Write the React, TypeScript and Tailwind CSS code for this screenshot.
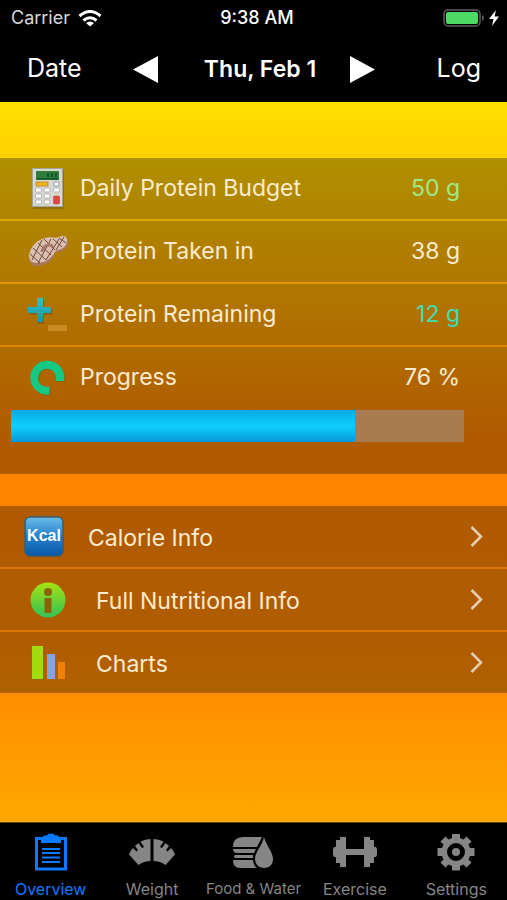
import { ReactNode } from "react";

interface StatRow {
  label: string;
  value: string;
  color: string;
  icon: ReactNode;
}

interface LinkRow {
  label: string;
  iconWidth: string;
  icon: ReactNode;
}

interface Tab {
  label: string;
  size: string;
  icon: ReactNode;
}

function CalculatorIcon() {
  return (
    <svg width="32" height="42" viewBox="0 0 32 42">
      <rect x="1" y="2" width="31" height="39" fill="#745c22" opacity="0.5" />
      <rect x="0.5" y="0.5" width="30" height="38" fill="#d9d9d2" stroke="#a5a49b" />
      <rect x="4" y="3" width="23" height="9" fill="#2f7d3c" />
      <path d="M5 10 H26 V11.5 H5 Z M15 5 h2 v4 h-2 Z M19 5 h2 v4 h-2 Z M23 5 h2 v4 h-2 Z" fill="#12572a" />
      <rect x="4" y="14" width="12" height="4" fill="#efb321" stroke="#bb8415" strokeWidth="0.8" />
      <rect x="22" y="14" width="5" height="4" fill="#f4f4f1" stroke="#8b9aa2" strokeWidth="0.8" />
      <g fill="#ffffff" stroke="#9c9ca6" strokeWidth="0.7">
        <rect x="3.500" y="20" width="6" height="4" rx="1" />
        <rect x="12" y="20" width="6" height="4" rx="1" />
        <rect x="21.500" y="20" width="6" height="4" rx="1" />
        <rect x="3.500" y="26" width="6" height="4" rx="1" />
        <rect x="12" y="26" width="6" height="4" rx="1" />
        <rect x="3.500" y="32" width="6" height="4" rx="1" />
        <rect x="12" y="32" width="6" height="4" rx="1" />
      </g>
      <rect x="21.500" y="28" width="6" height="8" rx="1" fill="#e8434a" stroke="#b34a43" strokeWidth="0.6" />
    </svg>
  );
}

function SteakIcon() {
  return (
    <svg width="40" height="33" viewBox="0 0 40 33">
      <path d="M1 23 C1 12 9 6 17 3 C23 1 27 4 31 3 C35 1 39 1 40 6 C41 12 36 17 30 17 C27 17 27 20 25 23 C21 29 15 31 9 31 C4 32 1 28 1 23 Z" fill="#a8795b" />
      <path d="M1 20 C3 10 10 5 17 3 C23 1 27 4 31 2 C35 0 39 1 39 5 C39 11 35 14 30 15 C26 16 27 18 24 21 C20 26 14 28 9 28 C3 28 1 25 1 20 Z" fill="#dcbfae" />
      <path d="M2 19 L12 28 M5 13 L18 25 M10 8 L23 20 M16 4 L27 15 M25 4 L34 12 M31 3 L38 8 M4 25 L14 5 M10 28 L23 4 M18 25 L31 4 M28 15 L36 2" stroke="#6b483e" strokeWidth="1" fill="none" />
      <path d="M14 17 C15 10 22 8 25 12" stroke="#a4796a" strokeWidth="3" fill="none" />
    </svg>
  );
}

function PlusMinusIcon() {
  return (
    <svg width="40" height="36" viewBox="0 0 40 36">
      <defs>
        <linearGradient id="plus" x1="0" y1="0" x2="0" y2="1">
          <stop offset="0" stopColor="#2fc5c4" />
          <stop offset="1" stopColor="#1793b0" />
        </linearGradient>
      </defs>
      <path d="M10 2 H16 V11 H24 V18 H16 V27 H10 V18 H2 V11 H10 Z" fill="#6f5715" opacity="0.6" />
      <path d="M9 1 H15 V10 H23 V16 H15 V25 H9 V16 H0 V10 H9 Z" fill="url(#plus)" />
      <rect x="20" y="28" width="19" height="6" fill="#c98c24" />
    </svg>
  );
}

function RingIcon() {
  return (
    <svg width="36" height="36" viewBox="0 0 36 36">
      <path d="M34 21 H25.500 A9 9 0 1 0 19.500 26.500 V34.500 A17 17 0 1 1 34 21 Z" transform="translate(1 1)" fill="#6e5a16" opacity="0.5" />
      <path d="M34 21 H25.500 A9 9 0 1 0 19.500 26.500 V34.500 A17 17 0 1 1 34 21 Z" fill="#14c984" />
    </svg>
  );
}

function KcalIcon() {
  return (
    <svg width="40" height="41" viewBox="0 0 40 41">
      <defs>
        <linearGradient id="kcal" x1="0" y1="0" x2="0" y2="1">
          <stop offset="0" stopColor="#6bbdea" />
          <stop offset="0.5" stopColor="#2381cb" />
          <stop offset="1" stopColor="#0758a8" />
        </linearGradient>
      </defs>
      <rect x="1" y="1" width="38" height="39" rx="5" fill="url(#kcal)" stroke="#3c5d6c" strokeWidth="1.5" />
      <text x="20" y="25" textAnchor="middle" fill="#ffffff" fontSize="16" fontWeight="700" fontFamily="'Liberation Sans', sans-serif">
        Kcal
      </text>
    </svg>
  );
}

function InfoIcon() {
  return (
    <svg width="36" height="36" viewBox="0 0 36 36">
      <defs>
        <linearGradient id="info" x1="0" y1="0" x2="0" y2="1">
          <stop offset="0" stopColor="#a7e211" />
          <stop offset="1" stopColor="#2fc257" />
        </linearGradient>
      </defs>
      <circle cx="18" cy="18" r="17.500" fill="url(#info)" />
      <circle cx="18" cy="10" r="4" fill="#8c6209" />
      <rect x="14.500" y="16" width="7" height="15" rx="1" fill="#8c6209" />
    </svg>
  );
}

function BarsIcon() {
  return (
    <svg width="36" height="34" viewBox="0 0 36 34">
      <rect x="3" y="1" width="11" height="33" fill="#7d6a12" opacity="0.5" />
      <rect x="2" y="0" width="11" height="33" fill="#a2dc10" />
      <rect x="17" y="8" width="8" height="25" fill="#86a3e6" />
      <rect x="28" y="16" width="7" height="17" fill="#ee8105" />
    </svg>
  );
}

function ClipboardIcon() {
  return (
    <svg width="32" height="38" viewBox="0 0 32 38">
      <rect x="1.500" y="5.500" width="29" height="30.500" fill="none" stroke="currentColor" strokeWidth="3" />
      <path d="M6 10 V6 L9 2.500 H12 Q12.500 0.500 16 0.500 Q19.500 0.500 20 2.500 H23 L26 6 V10 Z" fill="currentColor" />
      <path d="M7 16 H25 M7 20 H25 M7 24.500 H25 M7 29 H25" stroke="currentColor" strokeWidth="2" />
    </svg>
  );
}

function ScaleIcon() {
  return (
    <svg width="48" height="38" viewBox="0 0 48 38">
      <path d="M22.500 6 V28 Q16 28 10.500 32 L1 21.500 Q2 18 5 15 L8.500 18.500 L10 17 L7 13 L10.500 10 L14 15 L16 14 L12.500 8.500 Q17 6 22.500 6 Z" fill="currentColor" />
      <path d="M25.500 6 V28 Q32 28 37.500 32 L47 21.500 Q46 18 43 15 L39.500 18.500 L38 17 L41 13 L37.500 10 L34 15 L32 14 L35.500 8.500 Q31 6 25.500 6 Z" fill="currentColor" />
    </svg>
  );
}

function FoodIcon() {
  return (
    <svg width="42" height="38" viewBox="0 0 42 38">
      <path d="M1 14 Q1 4 11 4 H30 L25 14 Z M1 16 H24 L22 20 H5 Q1 20 1 16 Z M3 22 H21 L21 25 H3 Q1 23.500 3 22 Z M1 27 H21 Q21 32 25 35 H8 Q1 35 1 27 Z" fill="currentColor" />
      <path d="M32 4 C34 12 41 19 41 26 C41 32 37 35 32 35 C27 35 23 31 23 26 C23 19 30 13 32 4 Z" fill="currentColor" />
    </svg>
  );
}

function DumbbellIcon() {
  return (
    <svg width="44" height="38" viewBox="0 0 44 38">
      <path d="M7 4 H13 V16 H31 V4 H37 V7 H41 V14 H43 L44 16 V22 L43 24 H41 V30 H37 V34 H31 V22 H13 V34 H7 V30 H3 V24 H1 L0 22 V16 L1 14 H3 V7 H7 Z" fill="currentColor" />
    </svg>
  );
}

function GearIcon() {
  return (
    <svg width="38" height="38" viewBox="0 0 38 38">
      <path
        fillRule="evenodd"
        d="M15 5 V1 H23 V5 L26.500 6.500 L29.500 3.500 L34.500 8.500 L31.500 11.500 L33 15 H37.500 V23 H33 L31.500 26.500 L34.500 29.500 L29.500 34.500 L26.500 31.500 L23 33 V37.500 H15 V33 L11.500 31.500 L8.500 34.500 L3.500 29.500 L6.500 26.500 L5 23 H0.500 V15 H5 L6.500 11.500 L3.500 8.500 L8.500 3.500 L11.500 6.500 Z M19 10 A9 9 0 1 0 19 28 A9 9 0 1 0 19 10 Z"
        fill="currentColor"
      />
      <circle cx="19" cy="19" r="4" fill="currentColor" />
    </svg>
  );
}

const stats: StatRow[] = [
  { label: "Daily Protein Budget", value: "50 g", color: "text-[#a0ea86]", icon: <CalculatorIcon /> },
  { label: "Protein Taken in", value: "38 g", color: "text-[#fdebd0]", icon: <SteakIcon /> },
  { label: "Protein Remaining", value: "12 g", color: "text-[#3fdfb0]", icon: <PlusMinusIcon /> },
];

const links: LinkRow[] = [
  { label: "Calorie Info", iconWidth: "w-[88px]", icon: <KcalIcon /> },
  { label: "Full Nutritional Info", iconWidth: "w-[96px]", icon: <InfoIcon /> },
  { label: "Charts", iconWidth: "w-[96px]", icon: <BarsIcon /> },
];

const tabs: Tab[] = [
  { label: "Overview", size: "text-[16px]", icon: <ClipboardIcon /> },
  { label: "Weight", size: "text-[16px]", icon: <ScaleIcon /> },
  { label: "Food & Water", size: "text-[15px]", icon: <FoodIcon /> },
  { label: "Exercise", size: "text-[16px]", icon: <DumbbellIcon /> },
  { label: "Settings", size: "text-[16px]", icon: <GearIcon /> },
];

function StatusBar() {
  return (
    <div className="grid grid-cols-3 items-center h-9 pl-[11px] pr-2 text-lg">
      <div className="flex items-center gap-2 text-[#d8d8d8]">
        Carrier
        <svg width="24" height="17" viewBox="0 0 24 17" fill="none" stroke="#ffffff" strokeWidth="3">
          <path d="M1.500 6 Q12 -3 22.500 6" />
          <path d="M5.500 10.500 Q12 5 18.500 10.500" />
          <path d="M12 16.500 L8 13 Q12 10 16 13 Z" fill="#ffffff" stroke="none" />
        </svg>
      </div>
      <div className="pl-1 text-center font-medium whitespace-nowrap">9:38 AM</div>
      <div className="flex items-center justify-end gap-1">
        <svg width="42" height="18" viewBox="0 0 42 18">
          <rect x="1" y="1" width="36" height="16" rx="4" fill="none" stroke="#5e5e5e" strokeWidth="1.500" />
          <rect x="3" y="3" width="32" height="12" rx="2" fill="#4cd964" />
          <path d="M39 6 Q41 7 41 9 Q41 11 39 12 Z" fill="#5e5e5e" />
        </svg>
        <svg width="10" height="16" viewBox="0 0 10 16">
          <path d="M7 0 L0 9 H4.500 L3 16 L10 6.500 H5.500 Z" fill="#ffffff" />
        </svg>
      </div>
    </div>
  );
}

function NavBar() {
  return (
    <div className="flex items-center h-[66px] pl-[27px] pr-[26px] text-[25px]">
      <button className="flex-1 text-left">Date</button>
      <div className="flex items-center justify-between w-[242px]">
        <button aria-label="Previous day">
          <svg width="25" height="27" viewBox="0 0 25 27">
            <path d="M25 0 V27 L0 13.500 Z" fill="#ffffff" />
          </svg>
        </button>
        <h1 className="pl-3 text-[23px] font-semibold whitespace-nowrap">Thu, Feb 1</h1>
        <button aria-label="Next day">
          <svg width="25" height="27" viewBox="0 0 25 27">
            <path d="M0 0 V27 L25 13.500 Z" fill="#ffffff" />
          </svg>
        </button>
      </div>
      <button className="flex-1 text-right">Log</button>
    </div>
  );
}

export default function App() {
  const progress = 76;

  return (
    <div className="flex flex-col min-h-screen bg-black text-white font-[Inter,sans-serif]">
      <header>
        <StatusBar />
        <NavBar />
      </header>

      <main className="flex-1 flex flex-col gap-8 pt-14 pb-32 text-[23px] text-[#fdebd0] bg-[linear-gradient(to_bottom,#ffe000,#ff8400_46%,#ff8600_76%,#ffa800)]">
        {/* Daily totals */}
        <section>
          {stats.map((row) => (
            <div key={row.label}>
              <div className="flex items-center h-[61px] pr-[47px] bg-black/31">
                <div className="flex justify-center w-[80px] pl-4">{row.icon}</div>
                <span className="flex-1">{row.label}</span>
                <span className={row.color}>{row.value}</span>
              </div>
              <div className="h-[2px] bg-black/12" />
            </div>
          ))}
          <div className="pb-8 bg-black/31">
            <div className="flex items-center h-[61px] pr-[47px]">
              <div className="flex justify-center w-[80px] pl-4">
                <RingIcon />
              </div>
              <span className="flex-1">Progress</span>
              <span>{progress} %</span>
            </div>
            <div className="pt-[2px] pl-[11px] pr-[43px]">
              <div
                role="progressbar"
                aria-label="Progress"
                aria-valuenow={progress}
                className="h-8 bg-[#a87c50]"
              >
                <div
                  className="h-full bg-linear-to-b from-[#0aa8e0] via-[#10ceff] to-[#0899d6]"
                  style={{ width: `${progress}%` }}
                />
              </div>
            </div>
          </div>
        </section>

        {/* Detail pages */}
        <nav className="flex flex-col">
          {links.map((row, i) => (
            <div key={row.label}>
              {i > 0 && <div className="h-[2px] bg-black/12" />}
              <a href="#" className="flex items-center h-[61px] pr-6 bg-black/31">
                <div className={`flex justify-center ${row.iconWidth}`}>{row.icon}</div>
                <span className="flex-1 pt-1">{row.label}</span>
                <svg width="13" height="21" viewBox="0 0 13 21" fill="none" stroke="#e6cdb2" strokeWidth="2.500">
                  <path d="M1.500 1 L11 10.500 L1.500 20" />
                </svg>
              </a>
            </div>
          ))}
        </nav>
      </main>

      <footer className="grid grid-cols-5 h-[78px] border-t border-[#5c4310]">
        {tabs.map((tab, i) => (
          <button
            key={tab.label}
            className={`flex flex-col items-center gap-[6px] pt-[10px] leading-6 whitespace-nowrap ${tab.size} ${
              i === 0 ? "text-[#0a7aff]" : "text-[#858585]"
            }`}
          >
            {tab.icon}
            {tab.label}
          </button>
        ))}
      </footer>
    </div>
  );
}
